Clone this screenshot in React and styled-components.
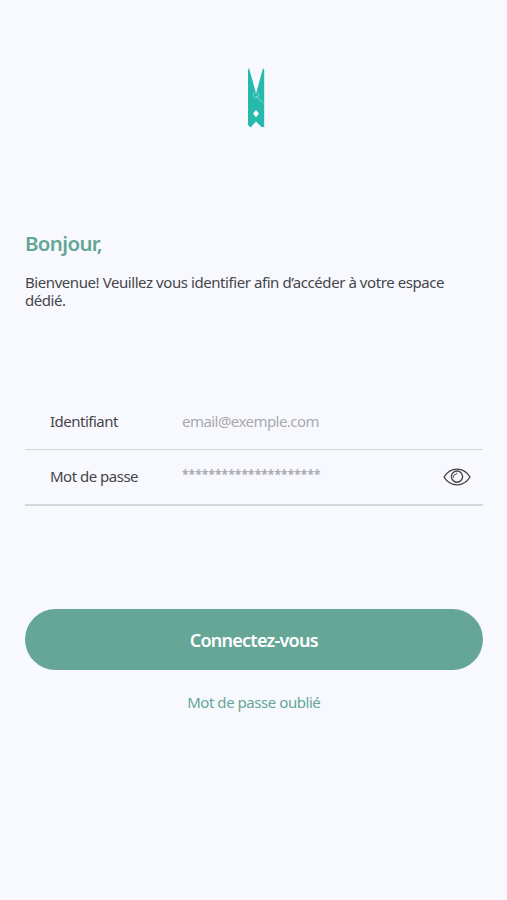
import React from 'react';
import styled, { createGlobalStyle, ThemeProvider } from 'styled-components';

const theme = {
  colors: {
    background: '#f8f9fe',
    green: '#65a697',
    logo: '#27b9aa',
    text: '#454549',
    placeholder: '#a9a9ae',
    line: '#d5d6da',
  },
};

const GlobalStyle = createGlobalStyle`
  * {
    box-sizing: border-box;
  }
  body {
    margin: 0;
    background-color: ${theme.colors.background};
    font-family: 'Noto Sans', 'Open Sans', sans-serif;
  }
`;

const Wrapper = styled.main`
  display: flex;
  flex-direction: column;
  min-height: 900px;
  padding: 67px 24.5px 0 25px;
  color: ${({ theme }) => theme.colors.text};
`;

const Logo = styled.svg`
  align-self: center;
  width: 18px;
  height: 62px;
  margin-left: 4px;
`;

const Title = styled.h1`
  margin: 101px 0 0;
  font-size: 20.5px;
  font-weight: 600;
  line-height: 26px;
  letter-spacing: -0.65px;
  color: ${({ theme }) => theme.colors.green};
`;

const Intro = styled.p`
  margin: 17px 0 0;
  font-size: 15px;
  line-height: 18px;
  letter-spacing: -0.43px;
`;

const Form = styled.form`
  display: flex;
  flex-direction: column;
  margin-top: 86px;
`;

const Field = styled.div`
  display: flex;
  align-items: center;
  height: ${({ $line }) => 54 + $line}px;
  padding: 0 12px 2px 25px;
  border-bottom: ${({ $line }) => $line}px solid ${({ theme }) => theme.colors.line};
`;

const Label = styled.label`
  width: 132px;
  font-size: 15px;
  line-height: 20px;
  letter-spacing: -0.5px;
`;

const Value = styled.span`
  flex: 1;
  font-size: 15px;
  line-height: 20px;
  letter-spacing: -0.55px;
  color: ${({ theme }) => theme.colors.placeholder};
`;

const Secret = styled(Value)`
  padding-bottom: 2px;
  font-size: 12px;
  font-weight: 700;
  letter-spacing: 0.1px;
`;

const EyeIcon = styled.svg`
  width: 28px;
  height: 18px;
  margin-top: 1px;
`;

const Button = styled.button`
  height: 61px;
  margin-top: 103px;
  padding: 0;
  border: 0;
  border-radius: 31px;
  background-color: ${({ theme }) => theme.colors.green};
  color: #fff;
  font-family: inherit;
  font-size: 18px;
  font-weight: 600;
  letter-spacing: -0.75px;
`;

const Forgot = styled.a`
  align-self: center;
  margin-top: 22px;
  font-size: 15px;
  line-height: 20px;
  letter-spacing: -0.45px;
  color: ${({ theme }) => theme.colors.green};
`;

const Clothespin = () => (
  <Logo viewBox="0 0 18 62" aria-label="logo">
    <path
      d="M2 1 L8.7 25 L9.5 25 L16 1 L17.2 3 V60 L14.5 60 L9 54.5 L3.5 60.5 L1 58 V3 Z"
      fill={theme.colors.logo}
    />
    <path d="M9 43 L12 46.5 L9 50.5 L6 46.5 Z" fill={theme.colors.background} />
    <circle cx="9" cy="28" r="2.7" fill="none" stroke="#8bdcd3" strokeWidth="0.8" />
    <path d="M9 29 L16.5 36" stroke="#8bdcd3" strokeWidth="0.8" />
  </Logo>
);

const Eye = () => (
  <EyeIcon viewBox="0 0 28 18" fill="none" stroke="#454549" strokeWidth="1.4">
    <path d="M1 9 C7.5 -1.5 20.5 -1.5 27 9 C20.5 19.5 7.5 19.5 1 9 Z" />
    <circle cx="14" cy="8.6" r="5.6" />
    <path d="M10.6 9.6 C10.3 7.5 11 6.6 12.8 6.4 C13.8 6.2 14 5.4 13.4 4.6" strokeWidth="1" />
  </EyeIcon>
);

const App = () => {
  return (
    <ThemeProvider theme={theme}>
      <GlobalStyle />
      <Wrapper>
        <Clothespin />
        <Title>Bonjour,</Title>
        <Intro>
          Bienvenue! Veuillez vous identifier afin d’accéder à votre espace
          dédié.
        </Intro>
        <Form>
          <Field $line={1}>
            <Label>Identifiant</Label>
            <Value>email@exemple.com</Value>
          </Field>
          <Field $line={2}>
            <Label>Mot de passe</Label>
            <Secret>{'*'.repeat(21)}</Secret>
            <Eye />
          </Field>
          <Button type="button">Connectez-vous</Button>
          <Forgot>Mot de passe oublié</Forgot>
        </Form>
      </Wrapper>
    </ThemeProvider>
  );
};

export default App;
